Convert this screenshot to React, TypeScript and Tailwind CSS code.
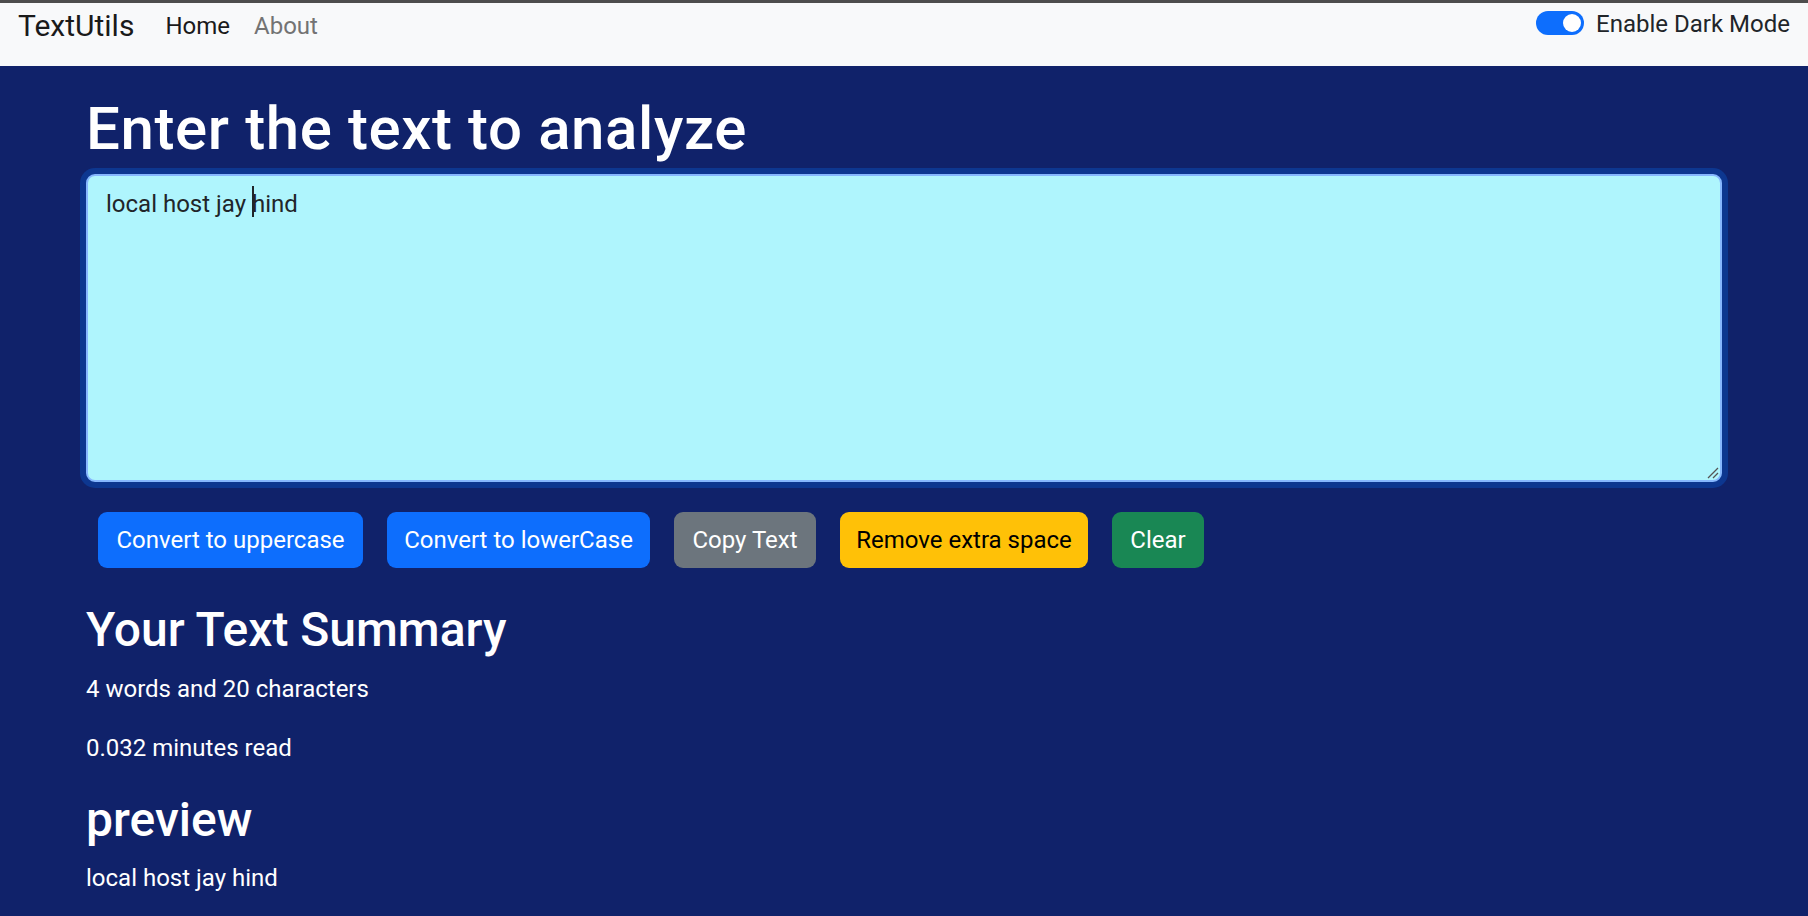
export default function App() {
  return (
    <div className="h-[916px] overflow-hidden bg-[#10226a] text-white [font-family:Roboto,'Segoe_UI',sans-serif]">
      <div className="h-[3px] bg-[#4d4d4d]" />

      {/* Navbar */}
      <nav className="flex h-[63px] items-start bg-[#f8f9fa] pl-[18px] pr-[18px]">
        <a className="mr-[19px] text-[30px] leading-[45px] text-[#1a1a1a]">TextUtils</a>
        <ul className="mt-[5px] flex text-[24px] leading-[36px]">
          <li className="px-[12px] text-[#1a1a1a]">Home</li>
          <li className="px-[12px] text-[#737373]">About</li>
        </ul>
        <div className="ml-auto flex items-start">
          <span className="relative mt-[8px] h-[24px] w-[48px] rounded-full bg-[#0d6efd]">
            <span className="absolute right-[3px] top-[3px] h-[18px] w-[18px] rounded-full bg-white" />
          </span>
          <label className="ml-[12px] mt-[3px] text-[24px] leading-[36px] text-[#212529]">Enable Dark Mode</label>
        </div>
      </nav>

      <main className="mx-auto w-[1636px]">
        <h1 className="mb-[9px] mt-[27px] text-[60px] font-medium leading-[72px] tracking-[0.6px]">Enter the text to analyze</h1>

        {/* Textarea (focused) */}
        <div className="relative h-[308px] rounded-[9px] border-2 border-[#86b7fe] bg-[#aff5fd] px-[18px] pt-[10px] text-[24px] leading-[36px] text-[#212529] shadow-[0_0_0_6px_#0d3790]">
          local host jay{' '}
          <span className="-mr-[2px] inline-block h-[31px] w-[2px] bg-[#212529] align-[-5px]" />
          hind
          <svg className="absolute bottom-[1px] right-[1px] h-[12px] w-[12px]" viewBox="0 0 12 12">
            <path d="M1 11L11 1M6 11L11 6" stroke="#555" strokeWidth="1.3" />
          </svg>
        </div>

        <div className="mt-[30px] flex gap-[24px] pl-[12px] text-[24px]">
          <button className="flex h-[56px] w-[265px] items-center justify-center rounded-[9px] bg-[#0d6efd] text-white">Convert to uppercase</button>
          <button className="flex h-[56px] w-[263px] items-center justify-center rounded-[9px] bg-[#0d6efd] text-white">Convert to lowerCase</button>
          <button className="flex h-[56px] w-[142px] items-center justify-center rounded-[9px] bg-[#6c757d] text-white">Copy Text</button>
          <button className="flex h-[56px] w-[248px] items-center justify-center rounded-[9px] bg-[#ffc107] text-black">Remove extra space</button>
          <button className="flex h-[56px] w-[92px] items-center justify-center rounded-[9px] bg-[#198754] text-white">Clear</button>
        </div>

        {/* Summary */}
        <h2 className="mb-[12px] mt-[33px] text-[48px] font-medium leading-[58px]">Your Text Summary</h2>
        <p className="mb-[23px] text-[24px] leading-[36px]">4 words and 20 characters</p>
        <p className="mb-[25px] text-[24px] leading-[36px]">0.032 minutes read</p>
        <h2 className="mb-[11px] text-[48px] font-medium leading-[58px]">preview</h2>
        <p className="text-[24px] leading-[36px]">local host jay hind</p>
      </main>
    </div>
  )
}
